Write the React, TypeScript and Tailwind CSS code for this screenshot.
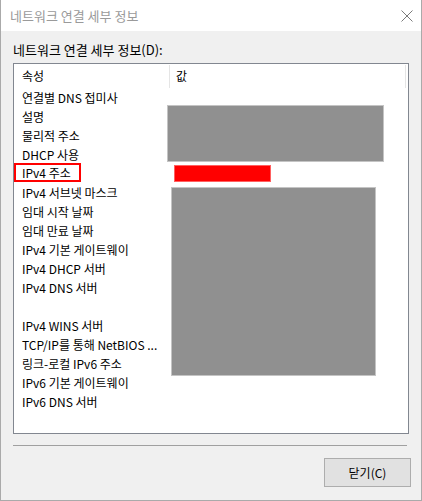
const rows = [
  '연결별 DNS 접미사',
  '설명',
  '물리적 주소',
  'DHCP 사용',
  'IPv4 주소',
  'IPv4 서브넷 마스크',
  '임대 시작 날짜',
  '임대 만료 날짜',
  'IPv4 기본 게이트웨이',
  'IPv4 DHCP 서버',
  'IPv4 DNS 서버',
  '',
  'IPv4 WINS 서버',
  'TCP/IP를 통해 NetBIOS ...',
  '링크-로컬 IPv6 주소',
  'IPv6 기본 게이트웨이',
  'IPv6 DNS 서버',
]

const App = () => {
  return (
    <div className="w-[422px] h-[501px] flex flex-col bg-[#f0f0f0] border-x border-b border-[#aaaaaa] font-['Noto_Sans_CJK_KR',sans-serif] text-[12px] text-black">
      {/* title bar */}
      <div className="h-[31px] shrink-0 bg-white flex items-center justify-between pl-[9px] pr-[7px]">
        <span className="text-[#9a9a9a] text-[13px]">네트워크 연결 세부 정보</span>
        <svg width="12" height="12" viewBox="0 0 12 12" className="mr-[1px]">
          <path d="M0.5 0.5 L11.5 11.5 M11.5 0.5 L0.5 11.5" stroke="#7a7a7a" strokeWidth="1" fill="none" />
        </svg>
      </div>

      <div className="flex flex-col pl-[12px]">
        <div className="mt-[11px] leading-[16px] text-[13px]">네트워크 연결 세부 정보(D):</div>

        <div className="mt-[5px] w-[396px] h-[371px] bg-white border border-[#828790] flex flex-col">
          {/* header */}
          <div className="h-[24px] flex">
            <div className="w-[156px] pl-[8px] leading-[22px] border-r border-[#e5e5e5] mt-[1px]">속성</div>
            <div className="w-[236px] pl-[6px] leading-[22px] border-r border-[#e5e5e5] mt-[1px]">값</div>
          </div>

          <div className="flex">
            <div className="w-[153px] flex flex-col">
              {rows.map((r, i) =>
                r === 'IPv4 주소' ? (
                  <div key={i} className="h-[19px] flex">
                    <span className="-mt-[1px] h-[19px] w-[67px] border-2 border-[#ff0000] pl-[6px] leading-[15px]">
                      {r}
                    </span>
                  </div>
                ) : (
                  <div key={i} className="h-[19px] pl-[8px] leading-[19px] whitespace-nowrap">
                    {r}
                  </div>
                )
              )}
            </div>

            {/* redacted values */}
            <div className="flex flex-col">
              <div className="mt-[17px] w-[217px] h-[57px] bg-[#909090] border border-[#c4c4c4]" />
              <div className="mt-[3px] ml-[7px] w-[97px] h-[17px] bg-[#ff0000] border border-[#ff6060]" />
              <div className="mt-[5px] ml-[4px] w-[205px] h-[189px] bg-[#909090] border border-[#c4c4c4]" />
            </div>
          </div>
        </div>

        <div className="mt-[11px] w-[394px] h-px bg-[#a0a0a0]" />

        <div className="mt-[12px] ml-auto mr-[10px] w-[87px] h-[29px] bg-[#e1e1e1] border border-[#adadad] flex items-center justify-center">
          닫기(C)
        </div>
      </div>
    </div>
  )
}

export default App
